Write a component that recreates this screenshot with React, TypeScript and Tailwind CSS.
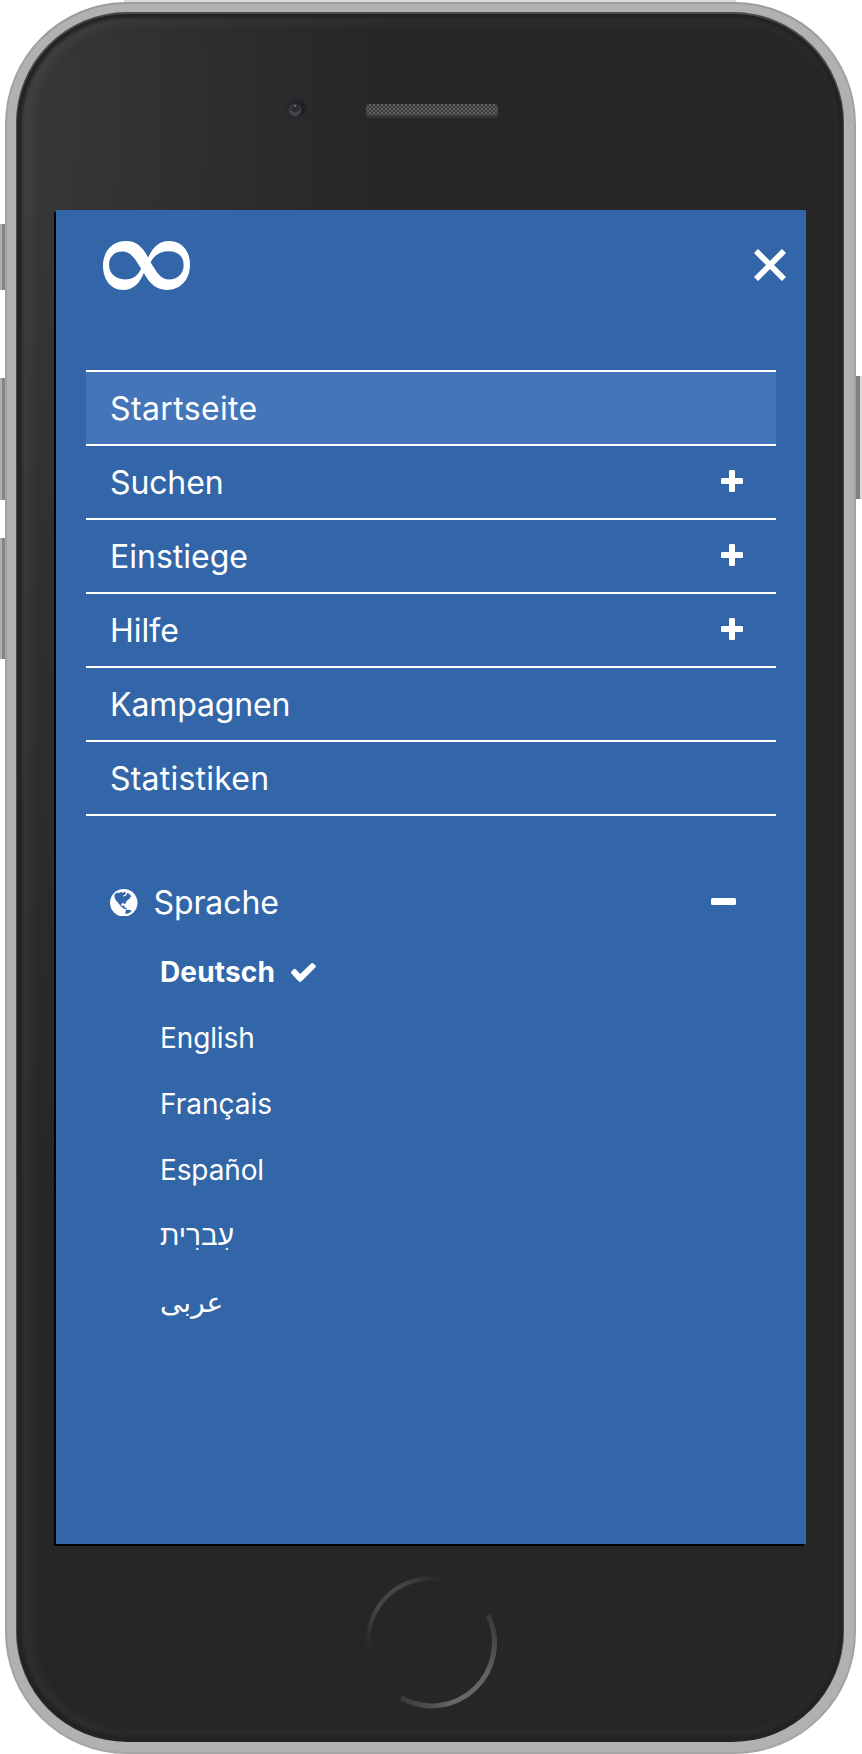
import React from "react";

const items = [
  { label: "Startseite", active: true, tracking: "tracking-[0.37px]" },
  { label: "Suchen", expandable: true, tracking: "tracking-[-0.12px]" },
  { label: "Einstiege", expandable: true, tracking: "" },
  { label: "Hilfe", expandable: true, tracking: "" },
  { label: "Kampagnen", tracking: "tracking-[-0.12px]" },
  { label: "Statistiken", tracking: "tracking-[0.23px]" },
];

const languages = [
  { name: "Deutsch", className: "font-bold tracking-[0.15px]", selected: true },
  { name: "English", className: "tracking-[-0.12px]" },
  { name: "Français", className: "" },
  { name: "Español", className: "tracking-[-0.12px]" },
  { name: "עִברִית", className: "pb-[2px] font-light" },
  { name: "عربى", className: "" },
];

function Infinity() {
  return (
    <svg className="h-[49px] w-[87px]" viewBox="0 0 260 148" preserveAspectRatio="none" fill="#fff" fillRule="evenodd">
      <path d="M135 50C150 16 170 0 196 0C236 0 260 30 260 72C260 118 231 148 191 148C160 148 141 131 122 97C108 132 88 148 60 148C25 148 0 118 0 75C0 30 28 0 69 0C98 0 117 15 135 50ZM114 84C96 54 84 32 58 32C36 32 18 45 18 72C18 98 38 116 66 116C90 116 103 106 114 84ZM142 64C164 98 172 116 198 116C222 116 241 98 241 73C241 46 224 31 196 31C171 31 154 42 142 64Z" />
    </svg>
  );
}

function Plus() {
  return (
    <svg className="mb-[2px] size-[22px]" viewBox="0 0 22 22" fill="#fff">
      <rect x="8" y="0" width="6" height="22" rx="1.3" />
      <rect x="0" y="8" width="22" height="6" rx="1.3" />
    </svg>
  );
}

function Globe() {
  return (
    <svg className="mt-px h-[27.5px] w-[27.5px]" viewBox="0 0 83 83">
      <circle cx="41.5" cy="41.5" r="41.5" fill="#fff" />
      <path
        fill="#3266a8"
        d="M13 17L20 11L27 12L33 9L39 11L45 8L48 13L44 18L38 20L41 23L48 20L52 12L58 14L65 23L59 25L62 28L55 32L49 38L46 45L38 42L33 46L37 51L43 49L44 55L51 58L48 62L40 58L31 50L25 42L18 35L14 26ZM48 63L57 63L66 66L60 72L46 76Z"
      />
    </svg>
  );
}

function Check() {
  return (
    <svg className="h-[19px] w-[25px]" viewBox="0 0 1550 1188" preserveAspectRatio="none" fill="#fff">
      <path d="M1522 232q0 40-28 68L770 1024l-136 136q-28 28-68 28t-68-28l-136-136L28 662Q0 634 0 594t28-68l136-136q28-28 68-28t68 28l266 295L1250 28q28-28 68-28t68 28l136 136q28 28 28 68z" />
    </svg>
  );
}

function HomeButton() {
  return (
    <svg className="h-[136px] w-[136px]" viewBox="0 0 136 136" fill="none">
      <defs>
        <linearGradient id="upper" x1="0" y1="1" x2="1" y2="0">
          <stop offset="0" stopColor="#262626" />
          <stop offset=".35" stopColor="#464646" />
          <stop offset=".7" stopColor="#444444" />
          <stop offset="1" stopColor="#262626" />
        </linearGradient>
        <linearGradient id="lower" x1="1" y1="0" x2="0" y2="1">
          <stop offset="0" stopColor="#363636" />
          <stop offset=".35" stopColor="#626262" />
          <stop offset=".7" stopColor="#686868" />
          <stop offset="1" stopColor="#343434" />
        </linearGradient>
      </defs>
      <path d="M5.5 76A63 63 0 0 1 80 6.5" stroke="url(#upper)" strokeWidth="4.4" />
      <path d="M125 42A63 63 0 0 1 38 125" stroke="url(#lower)" strokeWidth="5" />
    </svg>
  );
}

function Camera() {
  return (
    <svg className="size-6" viewBox="0 0 24 24">
      <circle cx="12" cy="12" r="11" fill="#28272b" />
      <circle cx="14" cy="11" r="8" fill="#201f25" />
      <circle cx="11" cy="13" r="6.5" fill="#3a393f" />
      <circle cx="11.5" cy="11.5" r="3.8" fill="#2b2a31" />
      <circle cx="11" cy="9" r="1.3" fill="#66656b" />
      <path d="M6.5 14q4.5 6 9 0" fill="none" stroke="#515056" strokeWidth="1.5" />
    </svg>
  );
}

function Speaker() {
  return (
    <svg className="h-[14px] w-[134px]" viewBox="0 0 134 14">
      <defs>
        <pattern id="mesh" width="4" height="4" patternUnits="userSpaceOnUse">
          <rect width="4" height="4" fill="#3c3c3c" />
          <rect width="2" height="2" fill="#606060" />
          <rect x="2" y="2" width="2" height="2" fill="#585858" />
        </pattern>
      </defs>
      <rect x="1" width="132" height="14" rx="4" fill="#343434" />
      <rect x="1" width="132" height="11.5" rx="4" fill="url(#mesh)" />
    </svg>
  );
}

export default function App() {
  return (
    <div className="relative h-[1754px] w-[862px] overflow-hidden bg-white pl-[5px] pr-[6px] font-['Inter','Noto_Sans','DejaVu_Sans',sans-serif] text-white">
      <div className="absolute left-0 top-[224px] h-[66px] w-[6px] border-l-2 border-[#b0b0b0] bg-[#858585]" />
      <div className="absolute left-0 top-[378px] h-[122px] w-[6px] border-l-2 border-[#b0b0b0] bg-[#858585]" />
      <div className="absolute left-0 top-[538px] h-[121px] w-[6px] border-l-2 border-[#b0b0b0] bg-[#858585]" />
      <div className="absolute right-0 top-[376px] h-[123px] w-2 border-r-2 border-[#d8d8d8] bg-[#808080]" />
      <div className="absolute left-[124px] top-0 h-1 w-[612px] bg-[#dcdcdc]" />

      <div className="relative h-full pt-[2px]">
        <div className="h-full rounded-[122px] border-2 border-t-[#9c9c9c] border-x-[#a2a2a2] border-b-[#a6a6a6] bg-[#b1b1b1] pb-[10px] pl-[9px] pr-[10px] pt-[8px]">
          <div className="flex h-full flex-col items-center rounded-[111px] bg-[#262626] bg-[radial-gradient(ellipse_380px_1100px_at_0px_100px,#393939,#2f2f2f_45%,#262626)] shadow-[inset_0_1px_0_1px_#4b4b4b,inset_0_0_3px_6px_#232323,inset_5px_1px_8px_11px_rgba(255,255,255,0.045)]">
            <div className="flex h-[198px] w-full items-start">
              <div className="ml-[268px] mt-[85px]"><Camera /></div>
              <div className="ml-[57px] mt-[92px]"><Speaker /></div>
            </div>

            <main className="ml-[2px] flex h-[1334px] w-[750px] flex-none flex-col bg-[#3266a8] shadow-[-2px_2px_0_#000]">
              <header className="flex h-[160px] items-start justify-between pl-[47px] pr-5 pt-[31px]">
                <Infinity />
                <button aria-label="Menü schließen" className="mt-[8px]">
                  <svg className="size-8" viewBox="0 0 32 32" stroke="#fff" strokeWidth="5.8">
                    <path d="M2 2L30 30M30 2L2 30" />
                  </svg>
                </button>
              </header>

              <nav className="mx-[30px] border-t-2 border-white">
                {items.map((item) => (
                  <a
                    key={item.label}
                    className={`flex h-[74px] items-center justify-between border-b-2 border-white pl-6 pr-[33px] text-[32px] ${item.active ? "bg-[#4475b9]" : ""}`}
                  >
                    <span className={`pt-[2px] ${item.tracking}`}>{item.label}</span>
                    {item.expandable && <Plus />}
                  </a>
                ))}
              </nav>

              <section className="mt-[50px]">
                <div className="flex h-[72px] items-center pl-[54px] pr-[70px] text-[32px]">
                  <Globe />
                  <span className="ml-[16px] flex-1 pt-[2px] tracking-[-0.1px]">Sprache</span>
                  <span className="mb-px h-[7px] w-[25.5px] rounded-[1.5px] bg-white" />
                </div>
                <ul className="ml-[104px] mt-px text-[28px]">
                  {languages.map((language) => (
                    <li
                      key={language.name}
                      className={`flex h-[66px] items-center gap-[16px] ${language.className}`}
                    >
                      <span>{language.name}</span>
                      {language.selected && <Check />}
                    </li>
                  ))}
                </ul>
              </section>
            </main>

            <div className="ml-[2px] mt-[29px]"><HomeButton /></div>
          </div>
        </div>
      </div>
    </div>
  );
}
